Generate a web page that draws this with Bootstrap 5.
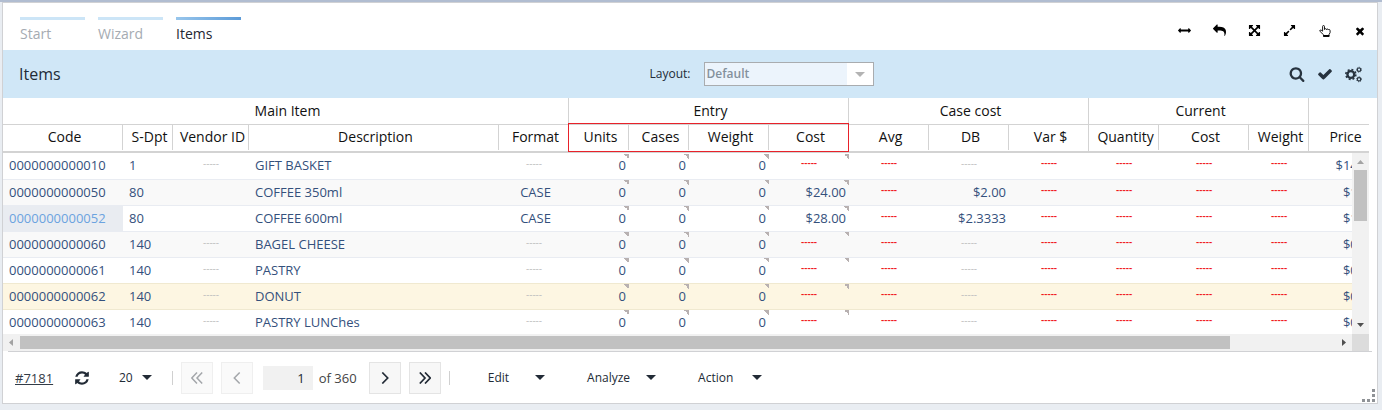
<!DOCTYPE html>
<html lang="en">
<head>
<meta charset="utf-8">
<meta name="viewport" content="width=device-width, initial-scale=1">
<title>Items</title>
<link rel="stylesheet" href="https://cdn.jsdelivr.net/npm/bootstrap@5.3.0/dist/css/bootstrap.min.css">
<style>
  body { font-family: "Open Sans", "Noto Sans", sans-serif; font-size: 13px; line-height: 18px; color: #222b36; padding: 0 3px 5px 0; }
  button { font: inherit; color: inherit; background: none; border: 0; padding: 0; }
  svg { display: block; fill: currentColor; }
  .workspace { background: #e9edf2; border-top: 2px solid #b1bdd1; padding: 0 4px 6px 2px; }
  .panel { background: #fff; border: 1px solid #d0d1d4; }

  .steps { gap: 13px; padding: 14px 0 0 17px; }
  .step { width: 65px; border-top: 3px solid #cce5f7; padding-top: 5px; font-size: 14px; color: #a5abb2; text-decoration: none; }
  .step.current { border-top: 0; padding-top: 8px; color: #1f2733; background: linear-gradient(90deg, #98c6ec, #5c9bd8) top / 100% 3px no-repeat; }
  .topbar { height: 47px; }
  .tool { width: 35px; height: 24px; color: #000; }

  .titlebar { height: 48px; background: #d0e7f7; padding-right: 10px; }
  .titlebar h1 { width: 645px; flex: 0 1 47.4%; padding-left: 16px; font-size: 16px; line-height: 24px; font-weight: 400; }
  .titlebar label { font-size: 12px; width: 54px; }
  .layout-select { width: 170px; height: 24px; padding: 0 30px 0 2px; font-size: 12px; font-weight: 600; color: #84919c; border: 1px solid #a9acaf; border-radius: 0; appearance: none;
    background: url("data:image/svg+xml,%3Csvg xmlns='http://www.w3.org/2000/svg' width='10' height='5'%3E%3Cpath d='M0 0h10L5 5z' fill='%23b3b3b3'/%3E%3C/svg%3E") right 8px center no-repeat,
      linear-gradient(#fff, #fff) right / 26px 100% no-repeat, #ecf4fc; }
  .act { width: 28px; height: 28px; color: #27333f; }

  .viewport { margin-right: 8px; min-height: 0; }
  .items { table-layout: fixed; width: 1376px; border-collapse: separate; border-spacing: 0; color: #34507c; }
  .items th, .items td { padding: 0 3px 0 6px; white-space: nowrap; }
  .items th { font-size: 14px; font-weight: 400; color: #111; text-align: center; }
  .items .groups th { height: 27px; border-bottom: 1px solid #d3d3d3; background: linear-gradient(#d3d3d3, #d3d3d3) right top / 1px 100% no-repeat; }
  .items .fields th { height: 28px; padding-bottom: 3px; border-bottom: 2px solid #d3d3d3; background: linear-gradient(#d3d3d3, #d3d3d3) right top / 1px 25px no-repeat; }
  .items .fields th.group-end { background-size: 1px 100%; }
  .items .fields th:last-child, .items .groups th:last-child { background: none; }
  .entry-first { position: relative; }
  .entry-first::before { content: ""; position: absolute; left: -1px; top: -2px; width: 281px; height: 29px; border: 1px solid #e8222a; pointer-events: none; }
  .items td { height: 26px; padding-bottom: 2px; border-bottom: 1px solid #e9ecf2; }
  .items tbody tr:first-child td { height: 27px; }
  .items tbody tr:nth-child(even) td { background-color: #f9f9f9; }
  .items tbody tr.marked td { background-color: #fdf6e2; border-color: #f0e9d0; }
  .items tbody tr:nth-child(5) td { border-color: #f0e9d0; }
  .items tbody td.selected { background-color: #e9ecf1; color: #6ba3df; }
  .items .num { text-align: right; }
  .items .mid { text-align: center; }
  .items .edit { background-image: linear-gradient(to bottom left, #b8b1b1 50%, transparent 50%); background-position: right top; background-size: 5px 5px; background-repeat: no-repeat; }
  .items tr:first-child .edit { background-position: right 0 top 1px; }
  .items .none, .items .empty { text-align: center; padding: 0 3px 6px; font-size: 10px; line-height: 12px; color: #bfbfbf; }
  .items .none { color: #f01820; font-weight: 600; }

  .vscroll { position: absolute; right: 0; top: 55px; bottom: 0; width: 17px; background: #f1f1f1; padding-top: 17px; }
  .vscroll .thumb { width: 13px; height: 51px; margin: 0 auto; }
  .thumb { background: #c1c1c1; }
  .vscroll svg { position: absolute; left: 5px; fill: #a3a3a3; }
  .vscroll .up { top: 7px; }
  .vscroll .down { bottom: 7px; fill: #505050; }
  .hscroll { height: 17px; margin-right: 8px; background: #f1f1f1; }
  .hscroll .start, .hscroll .end { width: 17px; padding: 0 5px; fill: #a3a3a3; }
  .hscroll .end { fill: #505050; }
  .hscroll .thumb { height: 13px; width: 92%; }
  .hscroll .corner { width: 17px; height: 17px; background: #dcdcdc; }

  .pager { height: 52px; margin: 0 5px; border-top: 1px solid #d0d1d4; padding-left: 7px; font-size: 12px; font-weight: 500; }
  .record { font-size: 13px; font-weight: 400; color: #333c47; width: 59px; }
  .per-page { gap: 9px; margin: 0 20px 0 29px; }
  .rule { width: 1px; height: 14px; background: #d0d0d0; }
  .pg { width: 32px; height: 32px; border: 1px solid #e4e4e4; background: #f7f7f7; }
  .pg:disabled { border-color: #efefef; background: #fafafa; color: #a4a7ab; }
  .page-no { width: 50px; height: 24px; margin-left: 2px; border: 0; background: #f1f1f1; text-align: right; padding: 0 8px 0 0; font-size: 13px; color: inherit; }
  .of { width: 48px; padding-left: 6px; font-size: 13px; font-weight: 400; color: #444; }
  .menus { margin-left: 38px; gap: 42px; }
  .menus button { gap: 16px; }
  .menus .menu-edit { gap: 26px; }
  .menus .menu-action { gap: 19px; }
  .grip { position: absolute; right: 2px; bottom: 1px; fill: #8f9296; }
</style>
</head>
<body class="vh-100 bg-white">
<svg class="d-none">
  <symbol id="caret" viewBox="0 0 10 5"><path d="M0 0h10L5 5z"/></symbol>
</svg>
<div class="workspace h-100">
<main class="panel position-relative h-100 d-flex flex-column">
  <header class="topbar d-flex justify-content-between flex-shrink-0">
    <nav class="steps d-flex align-items-start" aria-label="Steps">
      <a class="step" href="#">Start</a>
      <a class="step" href="#">Wizard</a>
      <a class="step current" href="#" aria-current="page">Items</a>
    </nav>
    <div class="d-flex align-items-center pt-2">
      <button class="tool d-flex align-items-center justify-content-center" aria-label="Fit width"><svg width="13" height="13" viewBox="0 0 1792 1792"><path d="M1792 896q0 26-19 45l-256 256q-19 19-45 19t-45-19-19-45v-128h-1024v128q0 26-19 45t-45 19-45-19l-256-256q-19-19-19-45t19-45l256-256q19-19 45-19t45 19 19 45v128h1024v-128q0-26 19-45t45-19 45 19l256 256q19 19 19 45z"/></svg></button>
      <button class="tool d-flex align-items-center justify-content-center" aria-label="Back"><svg width="13" height="13" viewBox="0 0 1792 1792"><path transform="matrix(-1 0 0 1 1792 0)" d="M1792 640q0 26-19 45l-512 512q-19 19-45 19t-45-19-19-45v-256h-224q-98 0-175.500 6t-154 21.500-133 42.500-105.500 69.500-80 101-48.500 138.500-17.500 181q0 55 5 123 0 6 2.500 23.500t2.500 26.500q0 15-8.500 25t-23.500 10q-16 0-28-17-7-9-13-22t-13.500-30-10.500-24q-127-285-127-451 0-199 53-333 162-403 875-403h224v-256q0-26 19-45t45-19 45 19l512 512q19 19 19 45z"/></svg></button>
      <button class="tool d-flex align-items-center justify-content-center" aria-label="Full screen"><svg width="13" height="13" viewBox="0 0 1792 1792"><path d="M1411 541l-355 355 355 355 144-144q29-31 70-14 39 17 39 59v448q0 26-19 45t-45 19h-448q-42 0-59-40-17-39 14-69l144-144-355-355-355 355 144 144q31 30 14 69-17 40-59 40h-448q-26 0-45-19t-19-45v-448q0-42 40-59 39-17 69 14l144 144 355-355-355-355-144 144q-19 19-45 19-12 0-24-5-40-17-40-59v-448q0-26 19-45t45-19h448q42 0 59 40 17 39-14 69l-144 144 355 355 355-355-144-144q-31-30-14-69 17-40 59-40h448q26 0 45 19t19 45v448q0 42-39 59-13 5-25 5-26 0-45-19z"/></svg></button>
      <button class="tool d-flex align-items-center justify-content-center" aria-label="Expand"><svg width="13" height="13" viewBox="0 0 1792 1792"><path d="M883 1056q0 13-10 23l-332 332 144 144q19 19 19 45t-19 45-45 19h-448q-26 0-45-19t-19-45v-448q0-26 19-45t45-19 45 19l144 144 332-332q10-10 23-10t23 10l114 114q10 10 10 23zm781-864v448q0 26-19 45t-45 19-45-19l-144-144-332 332q-10 10-23 10t-23-10l-114-114q-10-10-10-23t10-23l332-332-144-144q-19-19-19-45t19-45 45-19h448q26 0 45 19t19 45z"/></svg></button>
      <button class="tool d-flex align-items-center justify-content-center" aria-label="Select"><svg width="12" height="12" viewBox="0 0 12 12"><path d="M3.600 6.200V1.500a.9.9 0 0 1 1.900 0V4.500q.1-.8 1-.8t1 .9q.1-.6.9-.6t1 .9q.1-.5.800-.4.9.1.9 1.200V7.600L10 9.600v1.800H4.600V9.800L1.200 6.600q-.9-1-.1-1.500T3.600 6.200z" fill="none" stroke="currentColor" stroke-width=".9" stroke-linejoin="round"/><path d="M4.300 10h6v1.800h-6z"/></svg></button>
      <button class="tool d-flex align-items-center justify-content-center" aria-label="Close"><svg width="12" height="12" viewBox="0 0 1792 1792"><path d="M1490 1322q0 40-28 68l-136 136q-28 28-68 28t-68-28l-294-294-294 294q-28 28-68 28t-68-28l-136-136q-28-28-28-68t28-68l294-294-294-294q-28-28-28-68t28-68l136-136q28-28 68-28t68 28l294 294 294-294q28-28 68-28t68 28l136 136q28 28 28 68t-28 68l-294 294 294 294q28 28 28 68z"/></svg></button>
    </div>
  </header>

  <section class="titlebar d-flex align-items-center flex-shrink-0">
    <h1 class="m-0">Items</h1>
    <label for="layout">Layout:</label>
    <select id="layout" class="layout-select"><option>Default</option></select>
    <div class="d-flex ms-auto">
      <button class="act d-flex align-items-center justify-content-center" aria-label="Search"><svg width="16" height="16" viewBox="0 0 1792 1792"><path d="M1216 832q0-185-131.500-316.500t-316.500-131.500-316.500 131.500-131.500 316.500 131.500 316.500 316.500 131.500 316.500-131.500 131.500-316.500zm512 832q0 52-38 90t-90 38q-54 0-90-38l-343-342q-179 124-399 124-143 0-273.500-55.500t-225-150-150-225-55.500-273.500 55.500-273.500 150-225 225-150 273.500-55.500 273.500 55.500 225 150 150 225 55.500 273.500q0 220-124 399l343 343q37 37 37 90z"/></svg></button>
      <button class="act d-flex align-items-center justify-content-center" aria-label="Apply"><svg width="16" height="16" viewBox="0 0 1792 1792"><path d="M1671 566q0 40-28 68l-724 724-136 136q-28 28-68 28t-68-28l-136-136-362-362q-28-28-28-68t28-68l136-136q28-28 68-28t68 28l294 295 656-657q28-28 68-28t68 28l136 136q28 28 28 68z"/></svg></button>
      <button class="act d-flex align-items-center justify-content-center" aria-label="Settings"><svg width="17" height="17" viewBox="0 0 16 16" stroke="currentColor"><g fill="none"><circle cx="5.500" cy="8" r="3.200" stroke-width="2.200"/><circle cx="5.500" cy="8" r="4.700" stroke-width="1.500" stroke-dasharray="1.850 1.840"/><circle cx="13.200" cy="3.500" r="1.600" stroke-width="1.100"/><circle cx="13.200" cy="3.500" r="2.300" stroke-width=".9" stroke-dasharray=".9 .9"/><circle cx="13.200" cy="12.500" r="1.600" stroke-width="1.100"/><circle cx="13.200" cy="12.500" r="2.300" stroke-width=".9" stroke-dasharray=".9 .9"/></g></svg></button>
    </div>
  </section>

  <div class="viewport position-relative overflow-hidden flex-fill">
    <table class="items">
      <colgroup>
        <col style="width:120px"><col style="width:50px"><col style="width:76px"><col style="width:250px"><col style="width:70px">
        <col style="width:60px"><col style="width:60px"><col style="width:80px"><col style="width:80px">
        <col style="width:80px"><col style="width:80px"><col style="width:80px">
        <col style="width:70px"><col style="width:90px"><col style="width:60px"><col style="width:70px">
      </colgroup>
      <thead>
        <tr class="groups"><th colspan="5">Main Item</th><th colspan="4">Entry</th><th colspan="3">Case cost</th><th colspan="3">Current</th><th></th></tr>
        <tr class="fields"><th>Code</th><th>S-Dpt</th><th>Vendor ID</th><th>Description</th><th class="group-end">Format</th><th class="entry-first">Units</th><th>Cases</th><th>Weight</th><th class="group-end">Cost</th><th>Avg</th><th>DB</th><th class="group-end">Var $</th><th>Quantity</th><th>Cost</th><th class="group-end">Weight</th><th>Price</th></tr>
      </thead>
      <tbody>
        <tr><td>0000000000010</td><td>1</td><td class="empty">-----</td><td>GIFT BASKET</td><td class="empty">-----</td><td class="num edit">0</td><td class="num edit">0</td><td class="num edit">0</td><td class="none edit">-----</td><td class="none">-----</td><td class="empty">-----</td><td class="none">-----</td><td class="none">-----</td><td class="none">-----</td><td class="none">-----</td><td class="num">$14.00</td></tr>
        <tr><td>0000000000050</td><td>80</td><td></td><td>COFFEE 350ml</td><td class="mid">CASE</td><td class="num edit">0</td><td class="num edit">0</td><td class="num edit">0</td><td class="num edit">$24.00</td><td class="none">-----</td><td class="num">$2.00</td><td class="none">-----</td><td class="none">-----</td><td class="none">-----</td><td class="none">-----</td><td class="num">$1.00</td></tr>
        <tr><td class="selected">0000000000052</td><td>80</td><td></td><td>COFFEE 600ml</td><td class="mid">CASE</td><td class="num edit">0</td><td class="num edit">0</td><td class="num edit">0</td><td class="num edit">$28.00</td><td class="none">-----</td><td class="num">$2.3333</td><td class="none">-----</td><td class="none">-----</td><td class="none">-----</td><td class="none">-----</td><td class="num">$1.00</td></tr>
        <tr><td>0000000000060</td><td>140</td><td class="empty">-----</td><td>BAGEL CHEESE</td><td class="empty">-----</td><td class="num edit">0</td><td class="num edit">0</td><td class="num edit">0</td><td class="none edit">-----</td><td class="none">-----</td><td class="empty">-----</td><td class="none">-----</td><td class="none">-----</td><td class="none">-----</td><td class="none">-----</td><td class="num">$0.00</td></tr>
        <tr><td>0000000000061</td><td>140</td><td class="empty">-----</td><td>PASTRY</td><td class="empty">-----</td><td class="num edit">0</td><td class="num edit">0</td><td class="num edit">0</td><td class="none edit">-----</td><td class="none">-----</td><td class="empty">-----</td><td class="none">-----</td><td class="none">-----</td><td class="none">-----</td><td class="none">-----</td><td class="num">$0.00</td></tr>
        <tr class="marked"><td>0000000000062</td><td>140</td><td class="empty">-----</td><td>DONUT</td><td class="empty">-----</td><td class="num edit">0</td><td class="num edit">0</td><td class="num edit">0</td><td class="none edit">-----</td><td class="none">-----</td><td class="empty">-----</td><td class="none">-----</td><td class="none">-----</td><td class="none">-----</td><td class="none">-----</td><td class="num">$0.00</td></tr>
        <tr><td>0000000000063</td><td>140</td><td class="empty">-----</td><td>PASTRY LUNChes</td><td class="empty">-----</td><td class="num edit">0</td><td class="num edit">0</td><td class="num edit">0</td><td class="none edit">-----</td><td class="none">-----</td><td class="empty">-----</td><td class="none">-----</td><td class="none">-----</td><td class="none">-----</td><td class="none">-----</td><td class="num">$0.00</td></tr>
      </tbody>
    </table>
    <div class="vscroll" aria-hidden="true">
      <svg class="up" width="7" height="4" viewBox="0 0 7 4"><path d="M0 4h7L3.500 0z"/></svg>
      <div class="thumb"></div>
      <svg class="down" width="7" height="4" viewBox="0 0 7 4"><path d="M0 0h7L3.500 4z"/></svg>
    </div>
  </div>
  <div class="hscroll d-flex align-items-center flex-shrink-0" aria-hidden="true">
    <svg class="start" height="7" viewBox="0 0 7 7"><path d="M5 0v7L1 3.500z"/></svg>
    <div class="flex-fill"><div class="thumb"></div></div>
    <svg class="end" height="7" viewBox="0 0 7 7"><path d="M2 0v7l4-3.500z"/></svg>
    <div class="corner"></div>
  </div>

  <footer class="pager d-flex align-items-center flex-shrink-0">
    <a class="record" href="#">#7181</a>
    <button aria-label="Refresh"><svg width="16" height="16" viewBox="0 0 1792 1792"><path d="M1639 1056q0 5-1 7-64 268-268 434.500t-478 166.500q-146 0-282.500-55t-243.500-157l-129 129q-19 19-45 19t-45-19-19-45v-448q0-26 19-45t45-19h448q26 0 45 19t19 45-19 45l-137 137q71 66 161 102t187 36q134 0 250-65t186-179q11-17 53-117 8-23 30-23h192q13 0 22.500 9.500t9.500 22.500zm25-800v448q0 26-19 45t-45 19h-448q-26 0-45-19t-19-45 19-45l138-138q-148-137-349-137-134 0-250 65t-186 179q-11 17-53 117-8 23-30 23h-199q-13 0-22.500-9.500t-9.500-22.500v-7q65-268 270-434.500t480-166.500q146 0 284 55.500t245 156.500l130-129q19-19 45-19t45 19 19 45z"/></svg></button>
    <button class="per-page d-flex align-items-center">20 <svg width="10" height="5"><use href="#caret"/></svg></button>
    <span class="rule"></span>
    <div class="d-flex align-items-center gap-2 mx-2">
      <button class="pg d-flex align-items-center justify-content-center" disabled aria-label="First page"><svg width="12" height="12" viewBox="0 0 12 12"><path d="M6 .5.800 6 6 11.500M11.200.5 6 6l5.200 5.500" fill="none" stroke="currentColor" stroke-width="1.500"/></svg></button>
      <button class="pg d-flex align-items-center justify-content-center" disabled aria-label="Previous page"><svg width="12" height="12" viewBox="0 0 12 12"><path d="M8.700.5 3.300 6l5.400 5.500" fill="none" stroke="currentColor" stroke-width="1.500"/></svg></button>
    </div>
    <input class="page-no" type="text" value="1" aria-label="Page">
    <span class="of">of 360</span>
    <div class="d-flex align-items-center gap-2 mx-2">
      <button class="pg d-flex align-items-center justify-content-center" aria-label="Next page"><svg width="12" height="12" viewBox="0 0 12 12"><path d="M3.300.5 8.700 6l-5.400 5.500" fill="none" stroke="currentColor" stroke-width="1.700"/></svg></button>
      <button class="pg d-flex align-items-center justify-content-center" aria-label="Last page"><svg width="12" height="12" viewBox="0 0 12 12"><path d="M.8.500 6 6 .8 11.500M6 .5 11.200 6 6 11.500" fill="none" stroke="currentColor" stroke-width="1.700"/></svg></button>
    </div>
    <span class="rule"></span>
    <div class="menus d-flex">
      <button class="menu-edit d-flex align-items-center">Edit <svg width="10" height="5"><use href="#caret"/></svg></button>
      <button class="d-flex align-items-center">Analyze <svg width="10" height="5"><use href="#caret"/></svg></button>
      <button class="menu-action d-flex align-items-center">Action <svg width="10" height="5"><use href="#caret"/></svg></button>
    </div>
  </footer>
  <svg class="grip" width="13" height="13" viewBox="0 0 13 13" aria-hidden="true"><path d="M10 0h3v3h-3zM10 5h3v3h-3zM10 10h3v3h-3zM5 10h3v3H5zM0 10h3v3H0z"/></svg>
</main>
</div>
<script src="https://cdn.jsdelivr.net/npm/bootstrap@5.3.0/dist/js/bootstrap.bundle.min.js"></script>
</body>
</html>
